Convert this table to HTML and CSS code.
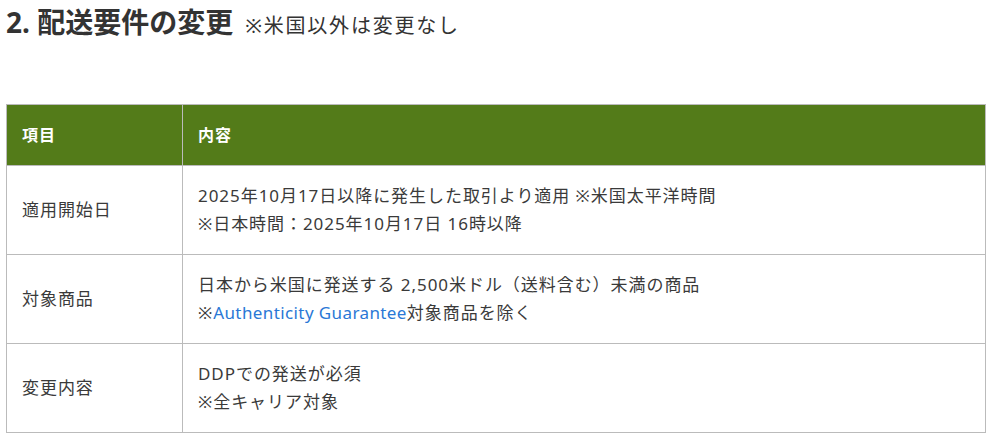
FILE: index.html
```html
<!DOCTYPE html>
<html lang="ja">
<head>
  <meta charset="UTF-8" />
  <title>配送要件の変更</title>
  <link rel="stylesheet" href="styles.css">
</head>
<body>

<div class="container">
  <h2 class="section-title">2. 配送要件の変更<span class="note">※米国以外は変更なし</span></h2>

  <table class="spec-table">
    <thead>
      <tr>
        <th class="col-item">項目</th>
        <th>内容</th>
      </tr>
    </thead>
    <tbody>
      <tr>
        <td>適用開始日</td>
        <td>2025年10月17日以降に発生した取引より適用 ※米国太平洋時間<br>※日本時間：2025年10月17日 16時以降</td>
      </tr>
      <tr>
        <td>対象商品</td>
        <td>日本から米国に発送する 2,500米ドル（送料含む）未満の商品<br>※<a href="#">Authenticity Guarantee</a>対象商品を除く</td>
      </tr>
      <tr>
        <td>変更内容</td>
        <td>DDPでの発送が必須<br>※全キャリア対象</td>
      </tr>
    </tbody>
  </table>
</div>

</body>
</html>
```

FILE: styles.css
```css
body {
  margin: 0;
  padding: 0;
  background-color: #fff;
  color: #333;
  font-family: 'Noto Sans', 'Noto Sans CJK JP', sans-serif;
}
.container {
  padding: 4px 6px 0;
}
.section-title {
  margin: 0 0 60px;
  font-size: 28px;
  line-height: 36px;
  font-weight: 700;
  color: #333;
}
.section-title .note {
  margin-left: 12px;
  font-size: 20px;
  font-weight: 400;
  letter-spacing: 1.8px;
}
.spec-table {
  width: 980px;
  border-collapse: collapse;
  font-size: 17px;
  line-height: 28px;
  letter-spacing: 0.95px;
}
.spec-table th,
.spec-table td {
  border: 1px solid #bbb;
  padding: 16px 15px;
  text-align: left;
  vertical-align: middle;
}
.spec-table th {
  background-color: #537b19;
  color: #fff;
  font-size: 16px;
  font-weight: 700;
}
.spec-table .col-item {
  width: 145px;
}
.spec-table td {
  color: #3a3a3a;
}
.spec-table a {
  color: #2a78d6;
  text-decoration: none;
  letter-spacing: 0.4px;
}
```
